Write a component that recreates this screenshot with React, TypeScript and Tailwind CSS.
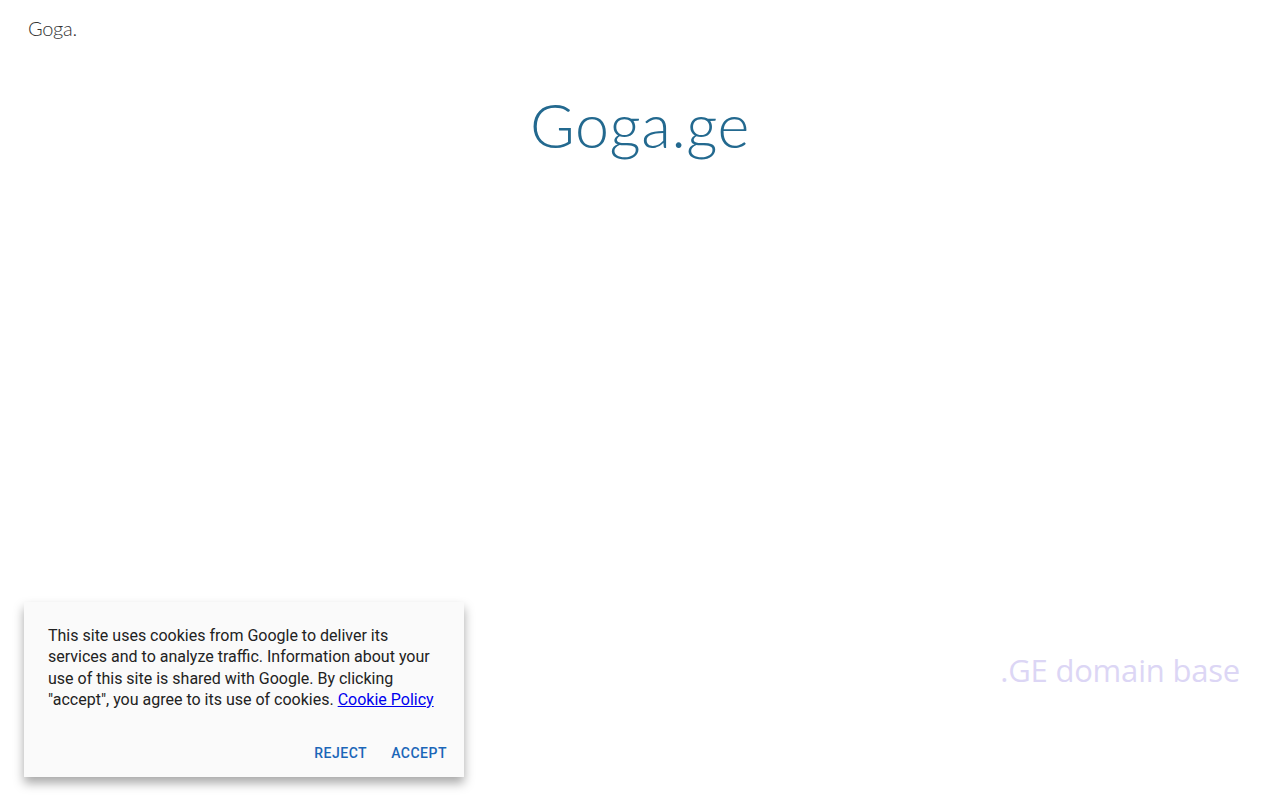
export default function App() {
  return (
    <div className="relative h-[800px] w-full overflow-hidden bg-white">
      <header className="px-7 pt-[13px]">
        <span className="font-['Lato',sans-serif] text-[20px] font-light tracking-[-0.3px] text-[#333]">
          Goga.
        </span>
      </header>

      <h1 className="mt-[51px] text-center font-['Lato',sans-serif] text-[61px] font-light leading-none tracking-[0.6px] text-[#23698f]">
        Goga.ge
      </h1>

      <div className="absolute right-10 top-[655px] font-['Open_Sans',sans-serif] text-[31px] leading-none tracking-[-0.2px] text-[#dcd6f5]">
        .GE domain base
      </div>

      <div className="absolute left-6 top-[602px] w-[440px] bg-[#fafafa] shadow-[0_6px_10px_rgba(0,0,0,0.35)]">
        <p className="px-6 pt-[23px] font-['Roboto',sans-serif] text-[16px] leading-[21.3px] text-[#222]">
          This site uses cookies from Google to deliver its services and to analyze traffic. Information about your
          use of this site is shared with Google. By clicking "accept", you agree to its use of cookies.{" "}
          <a href="#" className="text-[#0000ee] underline">
            Cookie Policy
          </a>
        </p>
        <div className="flex justify-end gap-6 px-[17px] pb-[13px] pt-[33px] font-['Roboto',sans-serif] text-[14px] font-medium tracking-[0.5px] text-[#1b66b8]">
          <button>REJECT</button>
          <button>ACCEPT</button>
        </div>
      </div>
    </div>
  );
}
